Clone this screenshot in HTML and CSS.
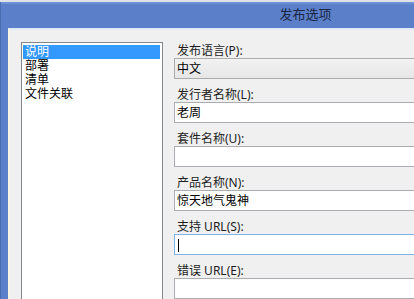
FILE: index.html
```html
<!DOCTYPE html>
<html lang="zh-CN">
<head>
    <meta charset="UTF-8">
    <meta name="viewport" content="width=device-width, initial-scale=1.0">
    <title>发布选项</title>
    <link rel="stylesheet" href="styles.css">
</head>
<body>
    <div class="window">
        <div class="titlebar">发布选项</div>
        <div class="client">
            <ul class="page-list">
                <li class="selected">说明</li>
                <li>部署</li>
                <li>清单</li>
                <li>文件关联</li>
            </ul>
            <div class="fields">
                <div class="field">
                    <label>发布语言(P):</label>
                    <div class="combo">中文</div>
                </div>
                <div class="field">
                    <label>发行者名称(L):</label>
                    <div class="textbox">老周</div>
                </div>
                <div class="field">
                    <label>套件名称(U):</label>
                    <div class="textbox"></div>
                </div>
                <div class="field">
                    <label>产品名称(N):</label>
                    <div class="textbox">惊天地气鬼神</div>
                </div>
                <div class="field">
                    <label>支持 URL(S):</label>
                    <div class="textbox focused"><span class="caret"></span></div>
                </div>
                <div class="field">
                    <label>错误 URL(E):</label>
                    <div class="textbox"></div>
                </div>
            </div>
        </div>
    </div>
</body>
</html>
```

FILE: styles.css
```css
html, body {
    margin: 0;
    padding: 0;
    height: 100%;
    overflow: hidden;
}

body {
    background-color: #dfe2e8;
    font-family: "Noto Sans", "Noto Sans CJK SC", sans-serif;
    font-size: 12px;
    color: #000;
}

.window {
    box-sizing: border-box;
    margin-top: 2px;
    height: 297px;
    width: 100%;
    overflow: hidden;
    background-color: #5b80c9;
    border-left: 1px solid #4a6cb0;
    display: flex;
    flex-direction: column;
}

.titlebar {
    flex: 0 0 26px;
    line-height: 24px;
    padding-left: 196px;
    text-align: center;
    font-size: 13px;
    color: #1a2646;
    box-shadow: inset 0 2px 0 #6f91d4;
}

.client {
    flex: 1;
    min-height: 0;
    overflow: hidden;
    margin-left: 7px;
    padding: 12px 0 0 11px;
    background-color: #f0f0f0;
    border-left: 2px solid #f7f4e4;
    border-top: 2px solid #e2e8f4;
    display: flex;
    gap: 11px;
    align-items: flex-start;
}

/* left list of pages */
.page-list {
    flex: 0 0 142px;
    box-sizing: border-box;
    height: 300px;
    margin: 0;
    padding: 2px 2px 0 1px;
    list-style: none;
    background-color: #fff;
    border: 1px solid #828790;
}

.page-list li {
    line-height: 14px;
    height: 14px;
    padding-left: 2px;
}

.page-list li.selected {
    background-color: #3399ff;
    color: #fff;
}

/* right side form */
.fields {
    flex: 0 0 300px;
    margin-top: 2px;
}

.field + .field {
    margin-top: 9px;
}

.field label {
    display: block;
    line-height: 14px;
    padding-left: 3px;
    color: #1e1e1e;
}

.combo,
.textbox {
    box-sizing: border-box;
    height: 21px;
    line-height: 19px;
    padding-left: 2px;
    border: 1px solid #abadb3;
    background-color: #fff;
}

.combo {
    border-color: #acacac;
    background: linear-gradient(#f2f2f2, #e6e6e6);
}

.textbox.focused {
    border-color: #7eb4ea;
}

.caret {
    display: inline-block;
    width: 1px;
    height: 13px;
    margin-left: 1px;
    background-color: #000;
    vertical-align: middle;
}
```
